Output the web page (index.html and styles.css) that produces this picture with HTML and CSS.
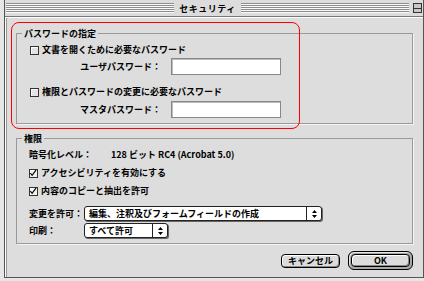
FILE: index.html
```html
<!DOCTYPE html>
<html lang="ja">
<head>
  <meta charset="UTF-8" />
  <title>セキュリティ</title>
  <link rel="stylesheet" href="styles.css">
</head>
<body>
  <div class="window">
    <div class="titlebar">
      <div class="stripes"></div>
      <div class="title">セキュリティ</div>
      <div class="stripes"></div>
      <div class="closebox"><span></span></div>
    </div>

    <div class="content">
      <!-- PASSWORDS -->
      <fieldset class="group group-pw">
        <legend>パスワードの指定</legend>
        <div class="check row-1"><span class="box"></span>文書を開くために必要なパスワード</div>
        <div class="field field-1">
          <span class="field-label">ユーザパスワード：</span>
          <span class="input"></span>
        </div>
        <div class="check row-2"><span class="box"></span>権限とパスワードの変更に必要なパスワード</div>
        <div class="field field-2">
          <span class="field-label">マスタパスワード：</span>
          <span class="input"></span>
        </div>
      </fieldset>

      <!-- PERMISSIONS -->
      <fieldset class="group group-perm">
        <legend>権限</legend>
        <div class="info">
          <span class="info-label">暗号化レベル：</span>
          <span>128 ビット RC4 (Acrobat 5.0)</span>
        </div>
        <div class="check row-3">
          <span class="box checked"><svg width="9" height="9" viewBox="0 0 9 9"><path d="M1.5 4 L3.5 6.5 L8 0.5" fill="none" stroke="#000" stroke-width="1.3"/></svg></span>アクセシビリティを有効にする
        </div>
        <div class="check row-4">
          <span class="box checked"><svg width="9" height="9" viewBox="0 0 9 9"><path d="M1.5 4 L3.5 6.5 L8 0.5" fill="none" stroke="#000" stroke-width="1.3"/></svg></span>内容のコピーと抽出を許可
        </div>
        <div class="select-row select-row-1">
          <span class="select-label">変更を許可：</span>
          <div class="popup popup-wide">
            <span class="popup-text">編集、注釈及びフォームフィールドの作成</span>
            <span class="popup-arrows"><svg width="5" height="8" viewBox="0 0 5 8"><path d="M2.5 0 L5 3 L0 3 Z M0 5 L5 5 L2.5 8 Z" fill="#000"/></svg></span>
          </div>
        </div>
        <div class="select-row select-row-2">
          <span class="select-label">印刷：</span>
          <div class="popup popup-narrow">
            <span class="popup-text">すべて許可</span>
            <span class="popup-arrows"><svg width="5" height="8" viewBox="0 0 5 8"><path d="M2.5 0 L5 3 L0 3 Z M0 5 L5 5 L2.5 8 Z" fill="#000"/></svg></span>
          </div>
        </div>
      </fieldset>

      <!-- BUTTONS -->
      <div class="buttons">
        <div class="btn btn-cancel">キャンセル</div>
        <div class="btn-default"><div class="btn btn-ok">OK</div></div>
      </div>
    </div>
  </div>

  <!-- annotation ring over the password group -->
  <div class="highlight"></div>
</body>
</html>
```

FILE: styles.css
```css
/* ---------- BASE ---------- */
*{margin:0;padding:0;box-sizing:border-box;}
html,body{
  width:424px;height:281px;overflow:hidden;
  background:#e6e6e6;
  font-family:"Noto Sans CJK JP","Noto Sans",sans-serif;
  font-size:9px;font-weight:700;
  color:#000;
}
body{position:relative;}

/* ---------- WINDOW ---------- */
.window{
  width:420px;height:278px;
  margin-left:4px;
  background:#dddddd;
  border:1px solid #555;border-top:none;
  display:flex;flex-direction:column;
}
.titlebar{
  height:17px;
  display:flex;align-items:center;gap:4px;
  padding:0 1px 0 1px;
  background:#dcdcdc;
  border-bottom:1px solid #777;
}
.stripes{
  flex:1;height:10px;
  background:repeating-linear-gradient(to bottom,#8c8c8c 0 1px,#fafafa 1px 2px);
}
.title{line-height:11px;padding:0 1px;letter-spacing:.5px;}
.closebox{
  width:9px;height:10px;
  border:1px solid #333;
  background:#c8c8c8;
  display:flex;align-items:center;
}
.closebox span{display:block;width:100%;height:1px;background:#333;}

.content{
  flex:1;
  padding:11px 10px 0 11px;
  box-shadow:inset 1px 1px 0 #fff,inset 2px 0 0 #999;
}

/* ---------- GROUP BOXES ---------- */
.group{
  border:1px solid #9a9a9a;
  box-shadow:1px 1px 0 #f4f4f4;
  padding:0 0 0 13px;
  display:flex;flex-direction:column;
}
.group legend{
  margin-left:-8px;padding:0 2px;
  line-height:11px;
}
.group-pw{height:96px;}
.group-perm{height:111px;margin-top:9px;padding-left:12px;}
.group-perm legend{margin-left:-7px;}

/* ---------- CHECKBOXES ---------- */
.check{
  display:flex;align-items:center;gap:3px;
  height:12px;line-height:12px;
}
.box{
  width:9px;height:9px;
  border:1px solid #333;
  background:#e4e4e4;
  box-shadow:inset 1px 1px 0 #fff;
  display:flex;
}
.box.checked{background:#f0f0f0;}
.box svg{display:block;margin:-1px 0 0 -1px;}

.row-1{margin-top:5px;}
.row-2{margin-top:11px;}
.row-3{margin-top:6px;}
.row-4{margin-top:6px;}

/* ---------- TEXT FIELDS ---------- */
.field{display:flex;align-items:center;gap:10px;}
.field-1{margin-top:2px;}
.field-2{margin-top:3px;}
.field-label{width:131px;text-align:right;line-height:12px;}
.input{
  width:110px;height:17px;
  background:#fff;
  border:1px solid #888;
  box-shadow:inset 1px 1px 0 #bbb;
}

/* ---------- INFO ---------- */
.info{display:flex;line-height:12px;margin-top:5px;}
.info-label{width:82px;}

/* ---------- POPUPS ---------- */
.select-row{display:flex;align-items:center;}
.select-row-1{margin-top:9px;}
.select-row-2{margin-top:2px;}
.select-label{width:55px;line-height:12px;}
.popup{
  height:15px;
  display:flex;align-items:stretch;
  background:#fff;
  border:1px solid #222;
  border-radius:3px;
  box-shadow:1px 1px 0 #666;
}
.popup-wide{width:238px;}
.popup-narrow{width:84px;}
.popup-text{flex:1;padding-left:4px;line-height:13px;white-space:nowrap;overflow:hidden;}
.popup-arrows{
  width:15px;
  border-left:1px solid #222;
  display:flex;align-items:center;justify-content:center;
}
.popup-arrows svg{display:block;}

/* ---------- BUTTONS ---------- */
.buttons{
  display:flex;justify-content:flex-end;align-items:center;gap:8px;
  margin-top:7px;padding-right:0;
}
.btn{
  display:flex;align-items:center;justify-content:center;
  border:1px solid #000;
  border-radius:4px;
  background:#dcdcdc;
  box-shadow:inset 1px 1px 0 #fff,inset -1px -1px 0 #888;
  line-height:11px;
}
.btn-cancel{width:59px;height:14px;}
.btn-default{
  width:65px;height:19px;
  border:1px solid #000;
  border-radius:6px;
  background:#a8a8a8;
  padding:2px;
  box-shadow:inset 1px 1px 0 #e8e8e8;
}
.btn-ok{width:100%;height:100%;}

/* ---------- ANNOTATION ---------- */
.highlight{
  position:absolute;
  left:11px;top:22px;
  width:289px;height:107px;
  border:1px solid #f00;
  border-radius:8px;
  pointer-events:none;
}
```
